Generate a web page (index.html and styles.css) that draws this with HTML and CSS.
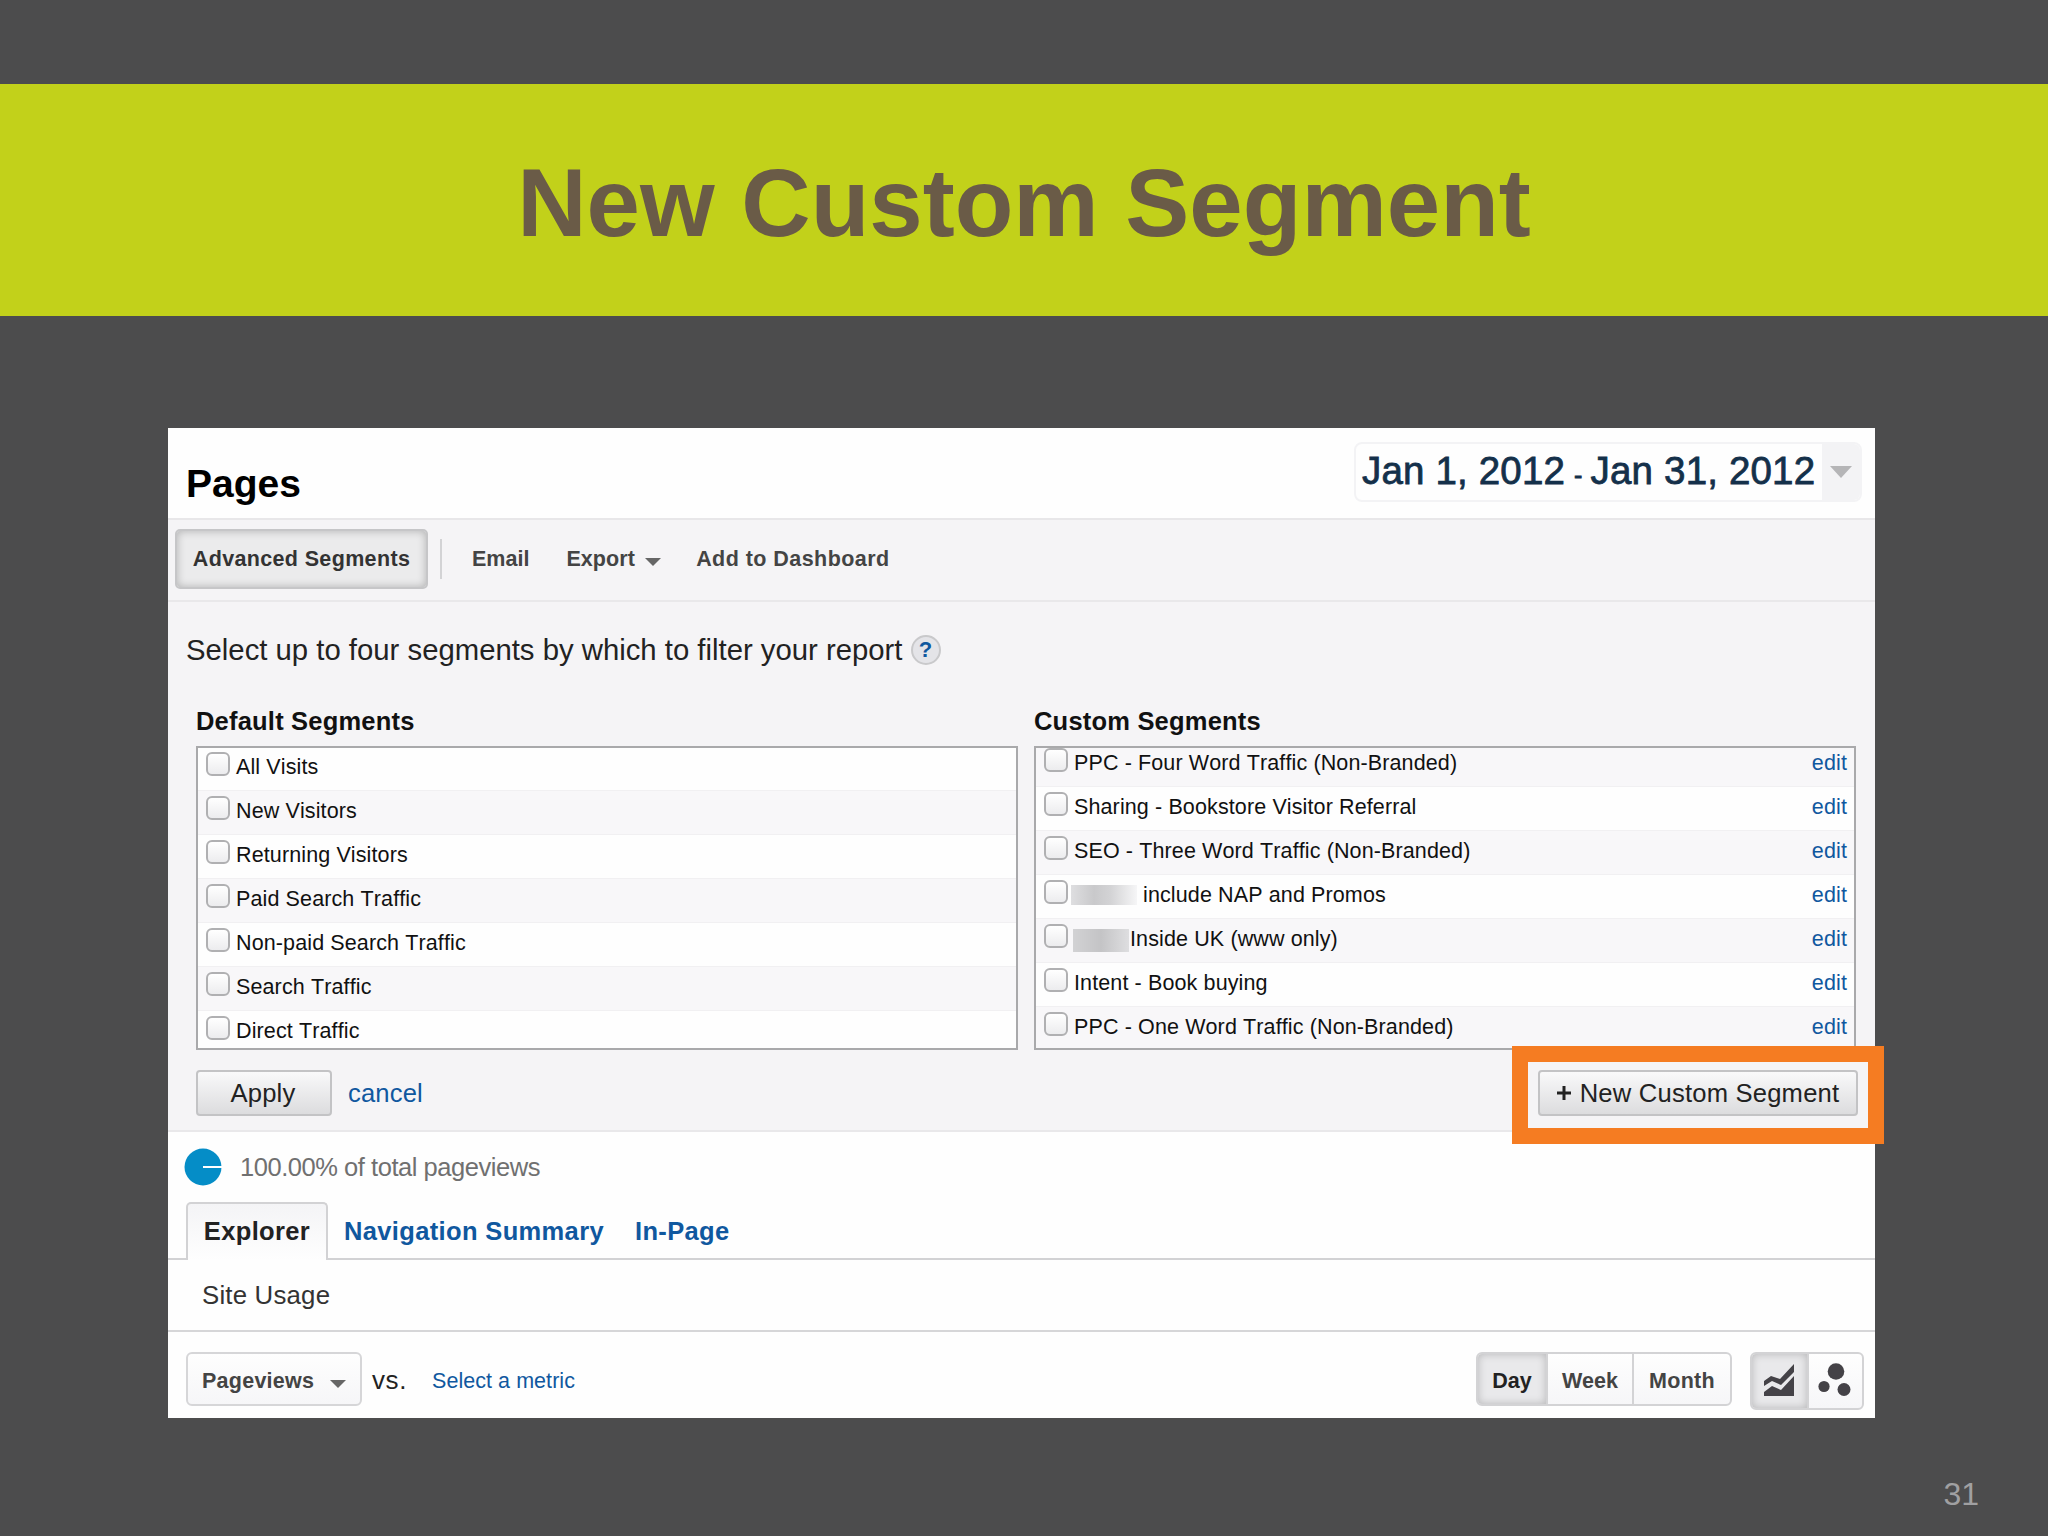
FILE: index.html
```
<!DOCTYPE html>
<html lang="en">
  <head>
    <meta charset="UTF-8" />
    <title>New Custom Segment</title>
    <link rel="stylesheet" href="styles.css">
  </head>
  <body>
    <header class="banner">
      <h1>New Custom Segment</h1>
    </header>

    <main class="panel">
      <div class="panel-header">
        <h2>Pages</h2>
        <div class="date-range">
          <div class="dates">Jan 1, 2012<span class="dash">-</span>Jan 31, 2012</div>
          <div class="date-toggle"><span class="arrow arrow-light"></span></div>
        </div>
      </div>

      <div class="toolbar">
        <div class="tool active">Advanced Segments</div>
        <span class="separator"></span>
        <span class="tool-link email">Email</span>
        <span class="tool-link export">Export <span class="arrow"></span></span>
        <span class="tool-link dashboard">Add to Dashboard</span>
      </div>

      <section class="segments">
        <p class="hint">Select up to four segments by which to filter your report <span class="help">?</span></p>
        <div class="columns">
          <div class="column">
            <h3>Default Segments</h3>
            <div class="list">
              <ul class="default-list">
                <li><span class="checkbox"></span>All Visits</li>
                <li><span class="checkbox"></span>New Visitors</li>
                <li><span class="checkbox"></span>Returning Visitors</li>
                <li><span class="checkbox"></span>Paid Search Traffic</li>
                <li><span class="checkbox"></span>Non-paid Search Traffic</li>
                <li><span class="checkbox"></span>Search Traffic</li>
                <li><span class="checkbox"></span>Direct Traffic</li>
              </ul>
            </div>
          </div>
          <div class="column">
            <h3 class="custom-title">Custom Segments</h3>
            <div class="list">
              <ul class="custom-list">
                <li><span class="checkbox"></span>PPC - Four Word Traffic (Non-Branded)<a class="edit">edit</a></li>
                <li><span class="checkbox"></span>Sharing - Bookstore Visitor Referral<a class="edit">edit</a></li>
                <li><span class="checkbox"></span>SEO - Three Word Traffic (Non-Branded)<a class="edit">edit</a></li>
                <li><span class="checkbox"></span><span class="redacted"></span>include NAP and Promos<a class="edit">edit</a></li>
                <li><span class="checkbox"></span><span class="redacted short"></span>Inside UK (www only)<a class="edit">edit</a></li>
                <li><span class="checkbox"></span>Intent - Book buying<a class="edit">edit</a></li>
                <li><span class="checkbox"></span>PPC - One Word Traffic (Non-Branded)<a class="edit">edit</a></li>
              </ul>
            </div>
          </div>
        </div>
        <div class="actions">
          <div class="btn apply">Apply</div>
          <a class="cancel">cancel</a>
          <div class="new-segment">
            <div class="btn"><svg class="plus" width="14" height="14" viewBox="0 0 14 14"><path d="M7 0v14M0 7h14" stroke="#222" stroke-width="3" /></svg>New Custom Segment</div>
            <span class="highlight"></span>
          </div>
        </div>
      </section>

      <div class="total">
        <svg width="38" height="38" viewBox="0 0 38 38">
          <circle cx="19" cy="19" r="18.5" fill="#058dc7" />
          <path d="M19 19h19" stroke="#fff" stroke-width="2" />
        </svg>
        <span>100.00% of total pageviews</span>
      </div>

      <nav class="tabs">
        <div class="tab">Explorer</div>
        <a>Navigation Summary</a>
        <a class="in-page">In-Page</a>
      </nav>

      <div class="sub-nav">Site Usage</div>

      <div class="controls">
        <div class="dropdown">Pageviews <span class="arrow"></span></div>
        <span class="vs">vs.</span>
        <a class="metric">Select a metric</a>
        <div class="group periods">
          <div class="day on">Day</div>
          <div class="week">Week</div>
          <div class="month">Month</div>
        </div>
        <div class="group views">
          <div class="on">
            <svg width="30" height="33" viewBox="0 0 30 33" fill="#444247">
              <path d="M0 22V17L7 12L16 15L30 0V8L17 21L8 17Z" />
              <path d="M0 32V28L8 22L17 26L30 12V32Z" />
            </svg>
          </div>
          <div>
            <svg width="34" height="34" viewBox="0 0 34 34" fill="#444247">
              <circle cx="18" cy="8.5" r="8.3" />
              <circle cx="6" cy="23.5" r="5.6" />
              <circle cx="26" cy="26.5" r="6.5" />
            </svg>
          </div>
        </div>
      </div>
    </main>

    <footer>31</footer>
  </body>
</html>
```
FILE: styles.css
```
* {
  box-sizing: border-box;
}

body {
  margin: 0;
  width: 2048px;
  height: 1536px;
  overflow: hidden;
  background-color: #4c4c4d;
  font-family: "Liberation Sans", Arial, sans-serif;
  padding-top: 84px;
}

h1, h2, h3, p, ul {
  margin: 0;
  padding: 0;
}

a {
  color: #10589f;
}

.banner {
  height: 232px;
  background-color: #c2d11a;
  display: flex;
  align-items: center;
  justify-content: center;
  padding-top: 5px;
}

.banner h1 {
  font-size: 96px;
  color: #6a5b47;
}

.panel {
  width: 1707px;
  height: 990px;
  margin: 112px 0 0 168px;
  background-color: #fefefe;
}

.panel-header {
  height: 92px;
  border-bottom: 2px solid #e8e7e9;
  display: flex;
  justify-content: space-between;
  padding: 14px 13px 0 18px;
}

.panel-header h2 {
  font-size: 39px;
  line-height: 84px;
  color: #000;
}

.date-range {
  display: flex;
  width: 508px;
  height: 60px;
  border: 2px solid #f3f3f5;
  border-radius: 8px;
  overflow: hidden;
}

.dates {
  flex: 1;
  padding-left: 6px;
  font-size: 38.5px;
  line-height: 54px;
  letter-spacing: 0.17px;
  color: #14304a;
  white-space: nowrap;
  -webkit-text-stroke: 0.8px #14304a;
}

.dash {
  font-size: 25px;
  margin: 0 8px 0 9px;
}

.date-toggle {
  width: 38px;
  background-color: #f3f3f5;
  display: flex;
  align-items: center;
  justify-content: center;
}

.arrow {
  display: inline-block;
  border: 8px solid transparent;
  border-top-color: #666;
  border-bottom: 0;
}

.arrow-light {
  border-width: 12px 11px 0;
  border-top-color: #b5b5b7;
}

.toolbar {
  height: 82px;
  background-color: #f5f4f6;
  border-bottom: 2px solid #e9e8ea;
  display: flex;
  align-items: center;
  padding: 0 0 2px 7px;
  font-size: 21.5px;
  font-weight: bold;
  color: #444;
}

.active {
  width: 253px;
  height: 60px;
  line-height: 56px;
  text-align: center;
  letter-spacing: 0.35px;
  color: #333;
  background-color: #ebebec;
  border: 2px solid #c6c6c8;
  border-radius: 5px;
  box-shadow: inset 0 0 9px rgba(0, 0, 0, 0.25);
}

.separator {
  width: 2px;
  height: 40px;
  margin-left: 12px;
  background-color: #d3d3d5;
}

.email {
  margin-left: 30px;
}

.export {
  margin-left: 37px;
  letter-spacing: 0.1px;
}

.export .arrow {
  margin-left: 4px;
}

.dashboard {
  margin-left: 35px;
  letter-spacing: 0.45px;
}

.segments {
  height: 530px;
  background-color: #f5f4f6;
  border-bottom: 2px solid #e9e8ea;
}

.hint {
  display: flex;
  align-items: center;
  height: 94px;
  padding: 2px 0 0 18px;
  font-size: 29.3px;
  color: #222;
}

.help {
  width: 30px;
  height: 30px;
  margin-left: 8px;
  border: 2px solid #c9c9cb;
  border-radius: 50%;
  background-color: #e4e4e8;
  color: #10589f;
  font-size: 22px;
  font-weight: bold;
  line-height: 26px;
  text-align: center;
}

.columns {
  display: flex;
  gap: 16px;
  padding-left: 28px;
}

.column {
  width: 822px;
}

.column h3 {
  height: 50px;
  line-height: 50px;
  font-size: 25.5px;
  letter-spacing: 0.2px;
  color: #111;
}

.list {
  height: 304px;
  border: 2px solid #a9a9ab;
  background-color: #fefefe;
  overflow: hidden;
}

.list ul {
  list-style: none;
}

.default-list {
  margin-top: -2px;
}

.custom-list {
  margin-top: -6px;
}

.list li {
  display: flex;
  align-items: center;
  height: 44px;
  padding: 0 7px 3px 8px;
  border-top: 1px solid #f1f0f2;
  font-size: 21.5px;
  font-kerning: none;
  letter-spacing: 0.12px;
  color: #111;
}

.default-list li:nth-child(even),
.custom-list li:nth-child(odd) {
  background-color: #f8f7f9;
}

.checkbox {
  width: 24px;
  height: 24px;
  margin: -7px 6px 0 0;
  border: 2px solid #b0b0b2;
  border-radius: 6px;
  background: linear-gradient(#fff, #ececee);
}

.edit {
  margin-left: auto;
}

.redacted {
  width: 66px;
  height: 20px;
  margin: 0 6px 0 -3px;
  background: linear-gradient(90deg, #dedee0, #c9c9cb 35%, #d3d3d5 60%, #f6f6f7);
}

.short {
  width: 56px;
  height: 23px;
  margin: 3px 1px 0 -1px;
  background: linear-gradient(90deg, #d2d2d4, #c4c4c6 50%, #dedee0);
}

.actions {
  display: flex;
  align-items: center;
  height: 86px;
  padding: 0 17px 0 28px;
  font-size: 25.6px;
}

.btn {
  display: flex;
  align-items: center;
  justify-content: center;
  height: 46px;
  border: 2px solid #c3c3c5;
  border-radius: 4px;
  background: linear-gradient(#f9f9fa, #dcdcde);
  color: #222;
}

.apply {
  width: 136px;
  padding-right: 2px;
  letter-spacing: 0.2px;
}

.cancel {
  margin-left: 16px;
  letter-spacing: 0.15px;
}

.new-segment {
  position: relative;
  margin-left: auto;
}

.new-segment .btn {
  width: 320px;
  letter-spacing: 0.2px;
}

.plus {
  margin-right: 9px;
}

.highlight {
  position: absolute;
  top: -24px;
  left: -26px;
  width: 372px;
  height: 98px;
  border: 16px solid #f57c22;
}

.total {
  display: flex;
  align-items: center;
  height: 70px;
  padding-left: 16px;
  font-size: 25.5px;
  letter-spacing: -0.46px;
  color: #707070;
}

.total span {
  margin-left: 18px;
}

.tabs {
  display: flex;
  height: 58px;
  padding-left: 18px;
  border-bottom: 2px solid #d2d2d4;
  font-size: 25.5px;
  font-weight: bold;
  line-height: 58px;
  letter-spacing: 0.35px;
}

.tab {
  width: 142px;
  height: 58px;
  margin-right: 16px;
  border: 2px solid #d2d2d4;
  border-bottom: 0;
  border-radius: 5px 5px 0 0;
  background: linear-gradient(#f4f4f6, #fefefe);
  line-height: 54px;
  text-align: center;
  color: #222;
}

.in-page {
  margin-left: 31px;
}

.sub-nav {
  height: 72px;
  line-height: 70px;
  padding-left: 34px;
  border-bottom: 2px solid #d6d6d8;
  font-size: 25.8px;
  letter-spacing: 0.2px;
  color: #333;
}

.controls {
  display: flex;
  align-items: flex-start;
  padding: 20px 11px 0 18px;
  font-size: 21.5px;
  line-height: 58px;
}

.dropdown {
  width: 176px;
  height: 54px;
  padding-left: 14px;
  border: 2px solid #d6d6d8;
  border-radius: 6px;
  background: linear-gradient(#fefefe, #f6f6f8);
  font-weight: bold;
  line-height: 54px;
  letter-spacing: 0.25px;
  color: #444;
}

.dropdown .arrow {
  margin-left: 10px;
}

.vs {
  margin-left: 10px;
  font-size: 26px;
  line-height: 56px;
  letter-spacing: 0.6px;
  color: #222;
}

.metric {
  margin-left: 25px;
  letter-spacing: 0.05px;
}

.group {
  display: flex;
  border: 2px solid #d3d3d5;
  border-radius: 6px;
  overflow: hidden;
  background: linear-gradient(#fefefe, #f6f6f8);
  font-weight: bold;
  color: #444;
}

.group > div {
  text-align: center;
  line-height: 54px;
}

.group > div + div {
  border-left: 2px solid #d3d3d5;
}

.group .on {
  background-color: #e9e9eb;
  box-shadow: inset 0 0 9px rgba(0, 0, 0, 0.22);
  color: #222;
}

.periods {
  height: 54px;
  margin-left: auto;
}

.day {
  width: 68px;
}

.week {
  width: 86px;
}

.month {
  width: 98px;
  letter-spacing: 0.3px;
}

.views {
  height: 58px;
  margin-left: 18px;
}

.views > div {
  display: flex;
  align-items: center;
  justify-content: center;
  width: 55px;
  padding: 0 1px 2px 0;
}

footer {
  width: 1979px;
  margin-top: 58px;
  text-align: right;
  font-size: 32px;
  line-height: 36px;
  color: #a0a0a2;
}
```
